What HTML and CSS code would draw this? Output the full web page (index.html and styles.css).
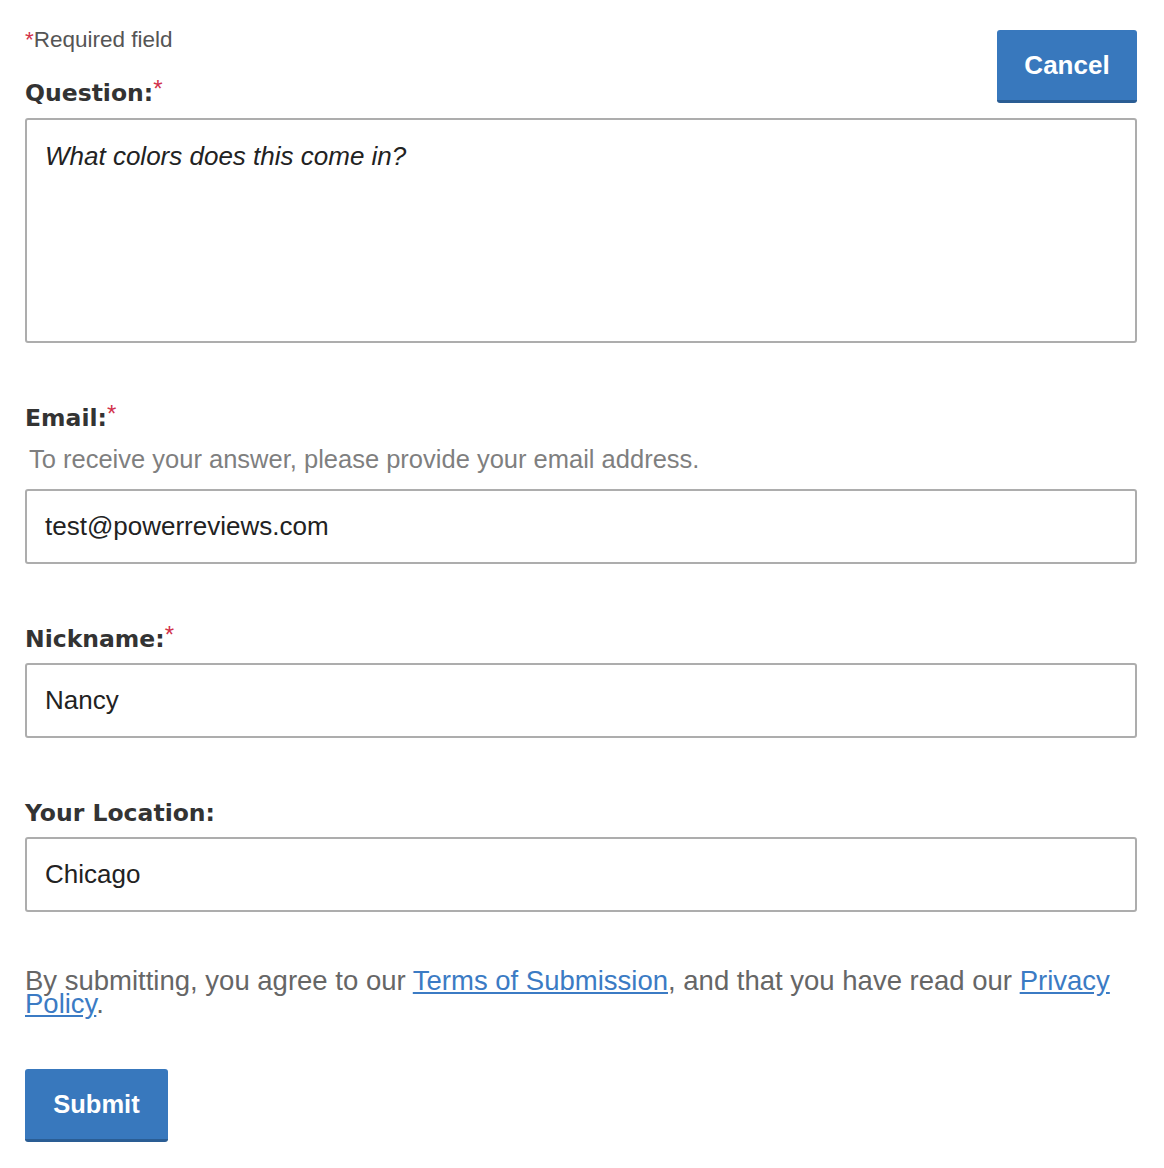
FILE: index.html
```html
<!DOCTYPE html>
<html>
<head>
<meta charset="utf-8">
<link rel="stylesheet" href="styles.css">
</head>
<body>
<form class="form">
  <div class="header">
    <div class="header-left">
      <div class="required-note"><span class="star">*</span>Required field</div>
      <label class="label">Question:<span class="star">*</span></label>
    </div>
    <button type="button" class="btn btn-cancel">Cancel</button>
  </div>
  <div class="box textarea"><span class="italic">What colors does this come in?</span></div>

  <div class="group">
    <label class="label">Email:<span class="star">*</span></label>
    <div class="help">To receive your answer, please provide your email address.</div>
    <div class="box input">test@powerreviews.com</div>
  </div>

  <div class="group">
    <label class="label">Nickname:<span class="star">*</span></label>
    <div class="box input">Nancy</div>
  </div>

  <div class="group">
    <label class="label">Your Location:</label>
    <div class="box input">Chicago</div>
  </div>

  <p class="terms">By submitting, you agree to our <a href="#">Terms of Submission</a>, and that you have read our <a href="#">Privacy Policy</a>.</p>

  <button type="button" class="btn btn-submit">Submit</button>
</form>
</body>
</html>
```

FILE: styles.css
```css
html, body {
  margin: 0;
  padding: 0;
  background: #ffffff;
}

.form {
  display: flex;
  flex-direction: column;
  align-items: flex-start;
  padding: 27px 27px 0 25px;
  font-family: "Liberation Sans", Arial, sans-serif;
  color: #222;
}

.header {
  display: flex;
  justify-content: space-between;
  align-items: flex-start;
  align-self: stretch;
}

.header-left {
  display: flex;
  flex-direction: column;
  gap: 26px;
}

.required-note {
  font-size: 22.5px;
  line-height: 26px;
  color: #555;
}

.star {
  color: #d2324b;
  font-weight: normal;
}

.label {
  display: block;
  font-family: "DejaVu Sans", Verdana, sans-serif;
  font-weight: 700;
  font-size: 23.5px;
  line-height: 28px;
  color: #333;
}

.label .star {
  font-family: "Liberation Sans", Arial, sans-serif;
  font-size: 24px;
  line-height: 0;
  vertical-align: 4px;
}

.btn {
  font-family: "Liberation Sans", Arial, sans-serif;
  font-weight: 700;
  font-size: 26px;
  color: #ffffff;
  background: #3878bd;
  border: none;
  border-bottom: 3px solid #2a5d94;
  border-radius: 3px;
  height: 73px;
  padding: 0;
  cursor: pointer;
}

.btn-cancel {
  width: 140px;
  margin-top: 3px;
}

.btn-submit {
  width: 143px;
  margin-top: 54px;
  font-size: 25.5px;
}

.box {
  align-self: stretch;
  box-sizing: border-box;
  border: 2px solid #adadad;
  border-radius: 3px;
  font-size: 26px;
  color: #222;
  padding: 0 18px;
}

.textarea {
  margin-top: 11px;
  height: 225px;
  padding-top: 21px;
  line-height: 30px;
}

.italic {
  font-style: italic;
}

.input {
  height: 75px;
  display: flex;
  align-items: center;
}

.group {
  align-self: stretch;
  display: flex;
  flex-direction: column;
  margin-top: 61px;
}

.group .label + .box {
  margin-top: 10px;
}

.help {
  margin-top: 12px;
  font-size: 25.5px;
  line-height: 30px;
  color: #7f7f7f;
  padding-left: 4px;
}

.help + .box {
  margin-top: 15px;
}

.terms {
  margin: 57px 0 0 0;
  font-size: 27.5px;
  line-height: 23px;
  color: #666;
}

.terms a {
  color: #3b7bc4;
  text-decoration: underline;
}
```
